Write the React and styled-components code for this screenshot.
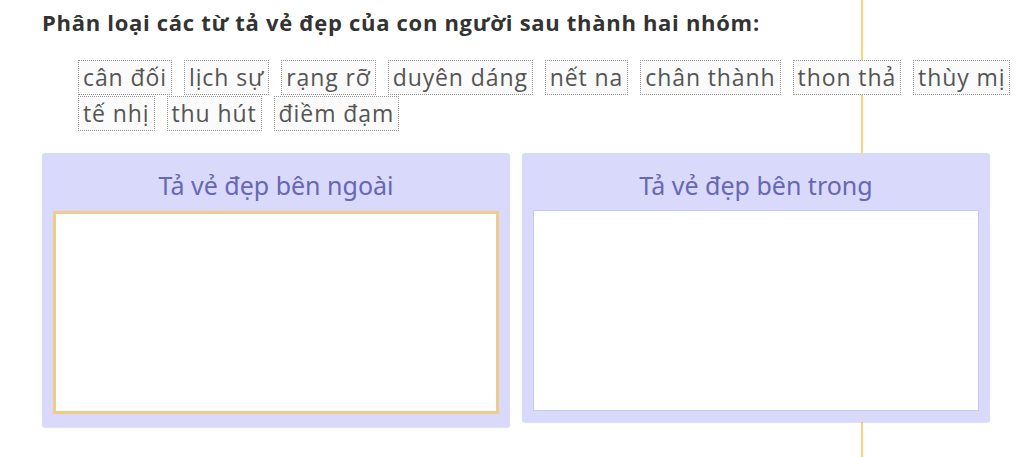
import React from 'react';
import styled, {createGlobalStyle} from 'styled-components';

const words = [
    'cân đối', 'lịch sự', 'rạng rỡ', 'duyên dáng', 'nết na', 'chân thành',
    'thon thả', 'thùy mị', 'tế nhị', 'thu hút', 'điềm đạm'
];

const groups = [
    {title: 'Tả vẻ đẹp bên ngoài', active: true},
    {title: 'Tả vẻ đẹp bên trong', active: false}
];

const GlobalStyle = createGlobalStyle`
    html, body {
        margin: 0;
        padding: 0;
        background: #ffffff;
    }
    body {
        font-family: "Open Sans", "Noto Sans", sans-serif;
    }
`;

const Page = styled.div`
    position: relative;
    width: 1024px;
    height: 457px;
    overflow: hidden;
    background: #ffffff;
`;

// thin guide line that sits behind everything
const Guide = styled.div`
    position: absolute;
    left: 861px;
    top: 0;
    bottom: 0;
    width: 2px;
    background: #f3d77e;
    z-index: 0;
`;

const Content = styled.div`
    position: relative;
    z-index: 1;
    padding: 6px 0 0 42px;
`;

const Title = styled.h1`
    margin: 0;
    font-size: 22px;
    font-weight: 700;
    letter-spacing: 0.7px;
    color: #333333;
    line-height: 32px;
`;

const WordBank = styled.div`
    display: flex;
    flex-wrap: wrap;
    column-gap: 12px;
    row-gap: 1px;
    margin: 22px 0 0 36px;
    width: 940px;
`;

const Word = styled.span`
    display: inline-block;
    padding: 0 4px;
    height: 33px;
    line-height: 33px;
    border: 1px dotted #9a9a9a;
    background: #fbfbfb;
    font-size: 23px;
    letter-spacing: 0.9px;
    color: #555555;
`;

const Groups = styled.div`
    display: flex;
    align-items: flex-start;
    gap: 12px;
    margin-top: 22px;
`;

const Panel = styled.div`
    width: 468px;
    box-sizing: border-box;
    padding: 0 11px ${p => (p.$active ? 13 : 11)}px;
    background: #d9d9fb;
    border-radius: 3px;
    box-shadow: 0 1px 1px rgba(120, 120, 190, 0.25);
`;

const PanelTitle = styled.div`
    height: ${p => (p.$active ? 58 : 57)}px;
    line-height: 64px;
    text-align: center;
    font-family: "Noto Sans", "Open Sans", sans-serif;
    font-size: 25px;
    color: #6767b3;
`;

const DropZone = styled.div`
    height: ${p => (p.$active ? 197 : 199)}px;
    background: #ffffff;
    border: ${p => (p.$active ? '3px solid #f0cb8c' : '1px solid #c9c9ef')};
`;

export default function App() {
    return (
        <Page>
            <GlobalStyle />
            <Guide />
            <Content>
                <Title>Phân loại các từ tả vẻ đẹp của con người sau thành hai nhóm:</Title>
                <WordBank>
                    {words.map(w => <Word key={w}>{w}</Word>)}
                </WordBank>
                <Groups>
                    {groups.map(g => (
                        <Panel key={g.title} $active={g.active}>
                            <PanelTitle $active={g.active}>{g.title}</PanelTitle>
                            <DropZone $active={g.active} />
                        </Panel>
                    ))}
                </Groups>
            </Content>
        </Page>
    );
}
